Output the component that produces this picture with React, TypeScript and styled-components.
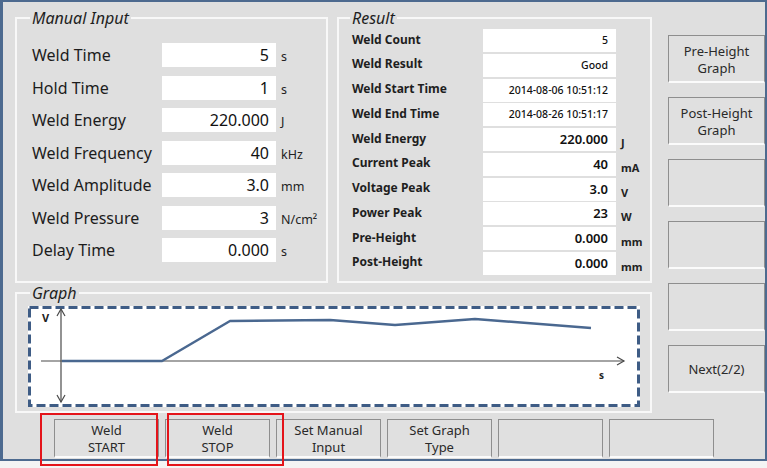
import React from "react";
import styled, { createGlobalStyle } from "styled-components";

const Global = createGlobalStyle`
  html, body { margin: 0; padding: 0; background: #f4f4f4; }
  body { font-family: "Noto Sans", "Open Sans", sans-serif; color: #1c1c1c; }
  *, *::before, *::after { box-sizing: border-box; }
`;

const Stage = styled.div`
  position: relative;
  width: 767px;
  height: 468px;
  overflow: hidden;
`;

const Frame = styled.div`
  width: 767px;
  height: 461px;
  background: #dfdfdf;
  border-style: solid;
  border-color: #4d6a8f;
  border-width: 2px 2px 2px 3px;
  display: flex;
`;

const Main = styled.div`
  width: 649px;
  flex: none;
  padding: 6px 0 0 12px;
  display: flex;
  flex-direction: column;
`;

const TopRow = styled.div`
  display: flex;
  gap: 9px;
`;

const GroupBox = styled.fieldset<{ $w: number; $h: number; $pt: number; $pl: number; $pb?: number }>`
  margin: 0;
  min-width: 0;
  width: ${(p) => p.$w}px;
  height: ${(p) => p.$h}px;
  border: 2px solid #f8f8f8;
  padding: ${(p) => p.$pt}px 0 ${(p) => p.$pb ?? 0}px ${(p) => p.$pl}px;
`;

const Legend = styled.legend<{ $ml: number }>`
  margin-left: ${(p) => p.$ml}px;
  padding: 0 2px;
  font-style: italic;
  font-size: 16px;
  line-height: 20px;
  color: #1e1e1e;
`;

const FieldGrid = styled.div<{ $label: number; $input: number; $row: number; $gap: number }>`
  display: grid;
  grid-template-columns: ${(p) => p.$label}px ${(p) => p.$input}px auto;
  grid-auto-rows: ${(p) => p.$row}px;
  row-gap: ${(p) => p.$gap}px;
  align-items: center;
`;

const ManualLabel = styled.div`
  font-size: 16px;
  line-height: 20px;
  color: #1c1c1c;
  white-space: nowrap;
`;

const ManualValue = styled.div`
  height: 100%;
  background: #ffffff;
  font-size: 16px;
  line-height: 24px;
  text-align: right;
  padding-right: 7px;
  color: #111;
`;

const ManualUnit = styled.div`
  align-self: end;
  font-size: 12.5px;
  line-height: 14px;
  padding: 0 0 3px 5px;
  color: #222;
  white-space: nowrap;
`;

const ResultLabel = styled.div`
  font-size: 12px;
  font-weight: 700;
  line-height: 16px;
  color: #1e1e1e;
  white-space: nowrap;
  margin-top: -2px;
`;

const ResultValue = styled.div<{ $small?: boolean }>`
  height: 100%;
  background: #ffffff;
  font-size: ${(p) => (p.$small ? "10.5px" : "13px")};
  font-weight: ${(p) => (p.$small ? 500 : 600)};
  line-height: 23px;
  text-align: right;
  padding-right: 8px;
  color: #111;
  white-space: nowrap;
`;

const ResultUnit = styled.div`
  align-self: end;
  font-size: 11px;
  font-weight: 700;
  line-height: 14px;
  padding: 0 0 1px 5px;
  color: #222;
`;

const ChartBox = styled.div`
  width: 612px;
  height: 101px;
`;

const BottomRow = styled.div`
  margin-top: 6px;
  padding-left: 39px;
  display: flex;
  gap: 6px;
`;

const PanelButton = styled.button<{ $w?: number; $h: number }>`
  width: ${(p) => (p.$w ? `${p.$w}px` : "100%")};
  height: ${(p) => p.$h}px;
  flex: none;
  margin: 0;
  padding: 0;
  background: #e0e0e0;
  border: 1px solid #8e8e8e;
  border-bottom: 2px solid #fbfbfb;
  font-family: inherit;
  font-size: 13px;
  line-height: 18px;
  color: #2a2a2a;
  text-align: center;
  display: flex;
  flex-direction: column;
  align-items: center;
  justify-content: center;
`;

const ButtonLine = styled.span`
  display: block;
  height: 17px;
  line-height: 18px;
  white-space: nowrap;
`;

const Side = styled.div`
  width: 97px;
  margin-left: 16px;
  padding-top: 33px;
  display: flex;
  flex-direction: column;
  gap: 14px;
`;

const Highlight = styled.div<{ $x: number; $w: number }>`
  position: absolute;
  left: ${(p) => p.$x}px;
  top: 413px;
  width: ${(p) => p.$w}px;
  height: 53px;
  border: 2px solid #e4141a;
  pointer-events: none;
`;

const manualRows = [
  { label: "Weld Time", value: "5", unit: "s" },
  { label: "Hold Time", value: "1", unit: "s" },
  { label: "Weld Energy", value: "220.000", unit: "J" },
  { label: "Weld Frequency", value: "40", unit: "kHz" },
  { label: "Weld Amplitude", value: "3.0", unit: "mm" },
  { label: "Weld Pressure", value: "3", unit: "N/cm²" },
  { label: "Delay Time", value: "0.000", unit: "s" },
];

const resultRows: { label: string; value: string; unit?: string; small?: boolean }[] = [
  { label: "Weld Count", value: "5", small: true },
  { label: "Weld Result", value: "Good", small: true },
  { label: "Weld Start Time", value: "2014-08-06 10:51:12", small: true },
  { label: "Weld End Time", value: "2014-08-26 10:51:17", small: true },
  { label: "Weld Energy", value: "220.000", unit: "J" },
  { label: "Current Peak", value: "40", unit: "mA" },
  { label: "Voltage Peak", value: "3.0", unit: "V" },
  { label: "Power Peak", value: "23", unit: "W" },
  { label: "Pre-Height", value: "0.000", unit: "mm" },
  { label: "Post-Height", value: "0.000", unit: "mm" },
];

const sideButtons = [["Pre-Height", "Graph"], ["Post-Height", "Graph"], [], [], [], ["Next(2/2)"]];
const bottomButtons = [["Weld", "START"], ["Weld", "STOP"], ["Set Manual", "Input"], ["Set Graph", "Type"], [], []];

const Lines = ({ lines }: { lines: string[] }) => (
  <>
    {lines.map((l, i) => (
      <ButtonLine key={i}>{l}</ButtonLine>
    ))}
  </>
);

const Chart = () => (
  <ChartBox>
    <svg width="612" height="101" viewBox="0 0 612 101">
      <rect x="0" y="0" width="612" height="101" fill="#ffffff" />
      <rect x="1.5" y="1.5" width="609" height="98" fill="none" stroke="#3e5c85" strokeWidth="3" strokeDasharray="9 4" />
      <g stroke="#4a4a4a" strokeWidth="1.2" fill="none">
        <line x1="33" y1="3" x2="33" y2="96" />
        <polyline points="29,10 33,3 37,10" />
        <polyline points="29,89 33,96 37,89" />
        <line x1="13" y1="55" x2="596" y2="55" />
        <polyline points="589,51 596,55 589,59" />
      </g>
      <polyline
        points="34,55 134,55 202,15 302,14 367,19 447,13 563,22"
        fill="none"
        stroke="#4a6890"
        strokeWidth="2.5"
        strokeLinejoin="round"
      />
      <text x="14" y="16" fontFamily="Noto Sans, sans-serif" fontSize="11" fontWeight="700" fill="#222">V</text>
      <text x="571" y="73" fontFamily="Noto Sans, sans-serif" fontSize="10" fontWeight="700" fill="#222">s</text>
    </svg>
  </ChartBox>
);

export default function App() {
  return (
    <Stage>
      <Global />
      <Frame>
        <Main>
          <TopRow>
            <GroupBox $w={313} $h={275} $pt={15} $pl={15}>
              <Legend $ml={-2}>Manual Input</Legend>
              <FieldGrid $label={130} $input={114} $row={24} $gap={8.5}>
                {manualRows.map((r) => (
                  <React.Fragment key={r.label}>
                    <ManualLabel>{r.label}</ManualLabel>
                    <ManualValue>{r.value}</ManualValue>
                    <ManualUnit>{r.unit}</ManualUnit>
                  </React.Fragment>
                ))}
              </FieldGrid>
            </GroupBox>
            <GroupBox $w={315} $h={275} $pt={1} $pl={13}>
              <Legend $ml={-2}>Result</Legend>
              <FieldGrid $label={131} $input={133} $row={23} $gap={1.75}>
                {resultRows.map((r) => (
                  <React.Fragment key={r.label}>
                    <ResultLabel>{r.label}</ResultLabel>
                    <ResultValue $small={r.small}>{r.value}</ResultValue>
                    <ResultUnit>{r.unit ?? ""}</ResultUnit>
                  </React.Fragment>
                ))}
              </FieldGrid>
            </GroupBox>
          </TopRow>
          <GroupBox $w={637} $h={130} $pt={3} $pl={11}>
            <Legend $ml={2}>Graph</Legend>
            <Chart />
          </GroupBox>
          <BottomRow>
            {bottomButtons.map((b, i) => (
              <PanelButton key={i} $w={105} $h={39}>
                <Lines lines={b} />
              </PanelButton>
            ))}
          </BottomRow>
        </Main>
        <Side>
          {sideButtons.map((b, i) => (
            <PanelButton key={i} $h={48}>
              <Lines lines={b} />
            </PanelButton>
          ))}
        </Side>
      </Frame>
      <Highlight $x={40} $w={118} />
      <Highlight $x={167} $w={117} />
    </Stage>
  );
}
